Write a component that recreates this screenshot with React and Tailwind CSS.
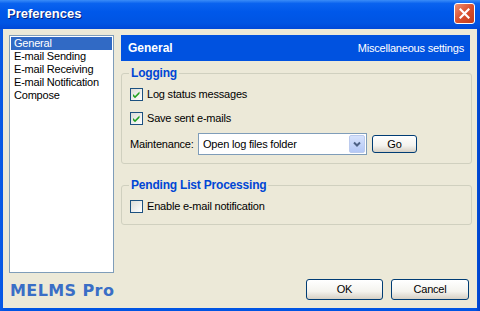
import React from "react";

const font = { fontFamily: '"Liberation Sans", Arial, sans-serif' };

function Check({ checked }) {
  return (
    <span className="relative inline-block w-[13px] h-[13px] border border-[#1c5180] bg-[linear-gradient(135deg,#dcdcd7,#ffffff)] shrink-0">
      {checked && (
        <svg width="11" height="11" viewBox="0 0 11 11" className="absolute left-0 top-0">
          <path d="M2 5 L4 7 L8.5 2.5 L8.5 4.8 L4 9.3 L2 7.3 Z" fill="#21a121" />
        </svg>
      )}
    </span>
  );
}

function XpButton({ children, className }) {
  return (
    <div
      className={
        "flex items-center justify-center rounded-[3px] border border-[#003c74] bg-[linear-gradient(180deg,#ffffff,#f4f3ee_60%,#d6d0c5)] text-[11px] text-black " +
        className
      }
    >
      {children}
    </div>
  );
}

export default function App() {
  const items = ["General", "E-mail Sending", "E-mail Receiving", "E-mail Notification", "Compose"];
  return (
    <div className="w-[480px] h-[311px] flex flex-col bg-[#0054e3] overflow-hidden tracking-[-0.2px]" style={font}>
      {/* Title bar */}
      <div className="h-[29px] shrink-0 flex items-center justify-between pl-[7px] pr-[5px] bg-[linear-gradient(180deg,#3a8cf8_0%,#0a63ef_12%,#0058ea_40%,#0054e3_80%,#0048d8_100%)]">
        <span className="text-white font-bold text-[13px] tracking-normal [text-shadow:1px_1px_0_#0a1e78] -mt-[1px]">Preferences</span>
        <div className="w-[21px] h-[21px] rounded-[3px] border border-white bg-[linear-gradient(135deg,#f09072,#d9502f_50%,#c13c1c)] flex items-center justify-center -mt-[3px]">
          <svg width="11" height="11" viewBox="0 0 11 11">
            <path d="M1.5 1.5 L9.5 9.5 M9.5 1.5 L1.5 9.5" stroke="#ffffff" strokeWidth="2.2" strokeLinecap="square" />
          </svg>
        </div>
      </div>
      {/* Body with frame */}
      <div className="flex-1 min-h-0 flex px-[3px] pb-[3px] bg-[linear-gradient(90deg,#0a5ae6,#0054e3_1%,#0054e3_99%,#0040c8)]">
        <div className="flex-1 flex bg-[#ece9d8] pl-[6px] pt-[6px] pr-[5px] pb-[8px] gap-[7px]">
          {/* Left column */}
          <div className="w-[105px] flex flex-col">
            <div className="h-[238px] shrink-0 border border-[#7f9db9] bg-white p-[1px] text-[11px] leading-[13px] text-black">
              {items.map((it, i) => (
                <div
                  key={it}
                  className={"h-[13px] pl-[3px] whitespace-nowrap " + (i === 0 ? "bg-[#316ac5] text-white" : "")}
                >
                  {it}
                </div>
              ))}
            </div>
            <div
              className="mt-[9px] pl-[1px] whitespace-nowrap text-[16px] font-bold leading-[18px] text-[#3a6ec6] tracking-[0.4px]"
              style={{ fontFamily: '"DejaVu Sans", Verdana, sans-serif' }}
            >
              MELMS Pro
            </div>
          </div>
          {/* Right column */}
          <div className="flex-1 flex flex-col">
            <div className="h-[26px] shrink-0 mr-[2px] bg-[#0052e0] flex items-center justify-between pl-[7px] pr-[6px]">
              <span className="text-white font-bold text-[12px] tracking-normal">General</span>
              <span className="text-white text-[11px]">Miscellaneous settings</span>
            </div>
            <fieldset className="mt-[5px] border border-[#d0d0bf] rounded-[3px] pl-[8px] pr-[8px] pt-[8px] pb-[8px]">
              <legend className="px-[2px] -ml-[1px] text-[12px] leading-[14px] font-bold text-[#0046d5]">Logging</legend>
              <div className="flex flex-col text-[11px] text-black">
                <div className="flex items-center gap-[4px] h-[13px]">
                  <Check checked />
                  <span>Log status messages</span>
                </div>
                <div className="flex items-center gap-[4px] h-[13px] mt-[11px]">
                  <Check checked />
                  <span>Save sent e-mails</span>
                </div>
                <div className="flex items-center mt-[8px] h-[22px]">
                  <span className="w-[68px]">Maintenance:</span>
                  <div className="w-[169px] h-[22px] border border-[#7f9db9] bg-white flex items-center justify-between pl-[4px] pr-[1px]">
                    <span>Open log files folder</span>
                    <div className="w-[16px] h-[18px] rounded-[2px] border border-[#bccbee] bg-[linear-gradient(180deg,#d6e2fc,#b4c8f6)] flex items-center justify-center">
                      <svg width="8" height="6" viewBox="0 0 8 6">
                        <path d="M1 1.5 L4 4.5 L7 1.5" stroke="#4d6185" strokeWidth="2" fill="none" />
                      </svg>
                    </div>
                  </div>
                  <XpButton className="ml-[5px] w-[45px] h-[18px]">Go</XpButton>
                </div>
              </div>
            </fieldset>
            <fieldset className="mt-[14px] border border-[#d0d0bf] rounded-[3px] pl-[8px] pr-[8px] pt-[8px] pb-[11px]">
              <legend className="px-[2px] -ml-[1px] text-[12px] leading-[14px] font-bold text-[#0046d5]">Pending List Processing</legend>
              <div className="flex items-center gap-[4px] h-[13px] text-[11px] text-black">
                <Check />
                <span>Enable e-mail notification</span>
              </div>
            </fieldset>
            <div className="flex-1" />
            <div className="flex justify-end gap-[8px] pr-[3px]">
              <XpButton className="w-[77px] h-[21px]">OK</XpButton>
              <XpButton className="w-[78px] h-[21px]">Cancel</XpButton>
            </div>
          </div>
        </div>
      </div>
    </div>
  );
}
